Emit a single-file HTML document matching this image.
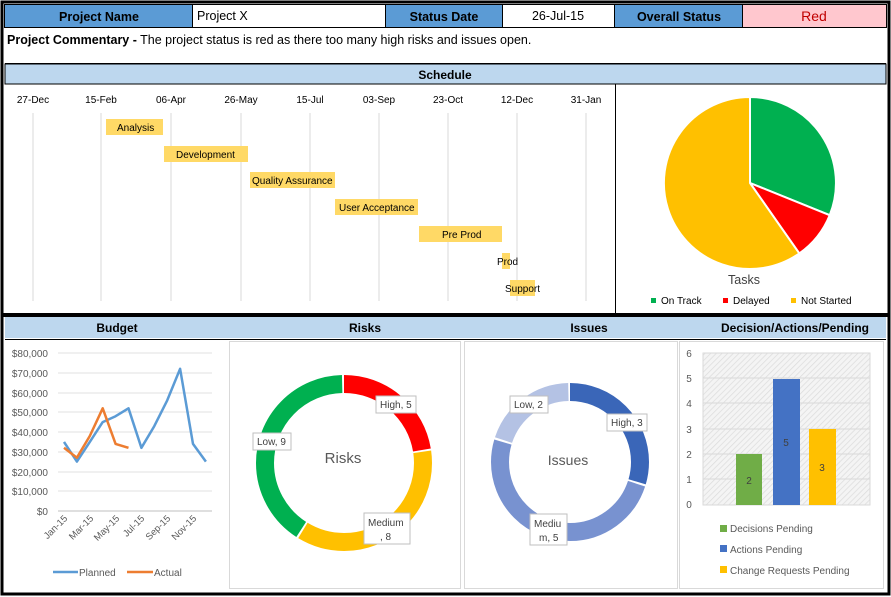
<!DOCTYPE html>
<html><head><meta charset="utf-8"><style>
body{margin:0;background:#fff;}
svg{display:block;font-family:"Liberation Sans",Arial,sans-serif;}
</style></head><body>
<svg width="891" height="597" viewBox="0 0 891 597" xmlns="http://www.w3.org/2000/svg">
<rect x="0" y="0" width="891" height="597" fill="#fff"/>
<!-- header row -->
<rect x="5" y="5" width="187" height="22" fill="#5b9bd5"/>
<rect x="386" y="5" width="116" height="22" fill="#5b9bd5"/>
<rect x="615" y="5" width="127" height="22" fill="#5b9bd5"/>
<rect x="743" y="5" width="143" height="22" fill="#ffc7ce"/>
<g stroke="#000" stroke-width="1" fill="none">
<rect x="4.5" y="4.5" width="882" height="23"/>
<line x1="192.5" y1="5" x2="192.5" y2="27"/><line x1="385.5" y1="5" x2="385.5" y2="27"/>
<line x1="502.5" y1="5" x2="502.5" y2="27"/><line x1="614.5" y1="5" x2="614.5" y2="27"/>
<line x1="742.5" y1="5" x2="742.5" y2="27"/>
</g>
<g font-size="12.5" font-weight="bold" fill="#000" text-anchor="middle">
<text x="99" y="21">Project Name</text><text x="444" y="21">Status Date</text><text x="679" y="21">Overall Status</text>
</g>
<text x="197" y="20" font-size="12.5">Project X</text>
<text x="558" y="20" font-size="12.5" text-anchor="middle">26-Jul-15</text>
<text x="814" y="21" font-size="14" fill="#c00000" text-anchor="middle">Red</text>
<!-- commentary -->
<text x="7" y="44" font-size="12.5"><tspan font-weight="bold">Project Commentary -</tspan> The project status is red as there too many high risks and issues open.</text>
<!-- schedule header -->
<rect x="5" y="64" width="881" height="20" fill="#bdd7ee" stroke="#000"/>
<text x="445" y="79" font-size="12" font-weight="bold" text-anchor="middle">Schedule</text>
<line x1="615.5" y1="84" x2="615.5" y2="313" stroke="#000"/>
<!-- gantt -->
<g font-size="10" text-anchor="middle">
<text x="33" y="103">27-Dec</text><text x="101" y="103">15-Feb</text><text x="171" y="103">06-Apr</text><text x="241" y="103">26-May</text><text x="310" y="103">15-Jul</text><text x="379" y="103">03-Sep</text><text x="448" y="103">23-Oct</text><text x="517" y="103">12-Dec</text><text x="586" y="103">31-Jan</text>
</g>
<g stroke="#d9d9d9">
<line x1="33" y1="113" x2="33" y2="301"/><line x1="101" y1="113" x2="101" y2="301"/><line x1="171" y1="113" x2="171" y2="301"/><line x1="241" y1="113" x2="241" y2="301"/><line x1="310" y1="113" x2="310" y2="301"/><line x1="379" y1="113" x2="379" y2="301"/><line x1="448" y1="113" x2="448" y2="301"/><line x1="517" y1="113" x2="517" y2="301"/><line x1="586" y1="113" x2="586" y2="301"/>
</g>
<g fill="#ffd966">
<rect x="106" y="119" width="57" height="16"/><rect x="164" y="146" width="84" height="16"/><rect x="250" y="172" width="85" height="16"/><rect x="335" y="199" width="83" height="16"/><rect x="419" y="226" width="83" height="16"/><rect x="502" y="253" width="8" height="16"/><rect x="510" y="280" width="25" height="16"/>
</g>
<g font-size="10">
<text x="117" y="131">Analysis</text><text x="176" y="158">Development</text><text x="252" y="184">Quality Assurance</text><text x="339" y="211">User Acceptance</text><text x="442" y="238">Pre Prod</text><text x="497" y="265">Prod</text><text x="505" y="292">Support</text>
</g>
<!-- pie -->
<path d="M750,183 L750,97 A86,86 0 0 1 829.7,215.2 Z" fill="#00b050" stroke="#fff" stroke-width="2"/>
<path d="M750,183 L829.7,215.2 A86,86 0 0 1 799.3,253.4 Z" fill="#ff0000" stroke="#fff" stroke-width="2"/>
<path d="M750,183 L799.3,253.4 A86,86 0 1 1 750,97 Z" fill="#ffc000" stroke="#fff" stroke-width="2"/>
<text x="744" y="284" font-size="12.5" fill="#404040" text-anchor="middle">Tasks</text>
<g font-size="10">
<rect x="651" y="298" width="5" height="5" fill="#00b050"/><text x="661" y="304">On Track</text>
<rect x="723" y="298" width="5" height="5" fill="#ff0000"/><text x="733" y="304">Delayed</text>
<rect x="791" y="298" width="5" height="5" fill="#ffc000"/><text x="801" y="304">Not Started</text>
</g>
<!-- thick divider -->
<rect x="2" y="313" width="887" height="4" fill="#000"/>
<!-- section header -->
<rect x="5" y="317" width="881" height="21" fill="#bdd7ee"/>
<g font-size="12" font-weight="bold" text-anchor="middle">
<text x="117" y="332">Budget</text><text x="365" y="332">Risks</text><text x="589" y="332">Issues</text><text x="795" y="332">Decision/Actions/Pending</text>
</g>
<line x1="5" y1="339.5" x2="886" y2="339.5" stroke="#000"/>
<g fill="none" stroke="#d9d9d9">
<rect x="229.5" y="341.5" width="231" height="247"/>
<rect x="464.5" y="341.5" width="213" height="247"/>
<rect x="679.5" y="341.5" width="204" height="247"/>
</g>
<!-- budget -->
<g font-size="10" fill="#595959" text-anchor="end">
<text x="48" y="357">$80,000</text><text x="48" y="377">$70,000</text><text x="48" y="397">$60,000</text><text x="48" y="416">$50,000</text><text x="48" y="436">$40,000</text><text x="48" y="456">$30,000</text><text x="48" y="476">$20,000</text><text x="48" y="495">$10,000</text><text x="48" y="515">$0</text>
</g>
<g stroke="#e0e0e0">
<line x1="58" y1="353" x2="212" y2="353"/><line x1="58" y1="373" x2="212" y2="373"/><line x1="58" y1="393" x2="212" y2="393"/><line x1="58" y1="412" x2="212" y2="412"/><line x1="58" y1="432" x2="212" y2="432"/><line x1="58" y1="452" x2="212" y2="452"/><line x1="58" y1="472" x2="212" y2="472"/><line x1="58" y1="491" x2="212" y2="491"/>
</g>
<line x1="58" y1="511" x2="212" y2="511" stroke="#bfbfbf"/>
<polyline points="64,441.9 76.9,461.6 89.8,441.9 102.7,422.1 115.6,416.2 128.5,408.3 141.4,447.8 154.3,426.1 167.2,400.4 180.1,368.8 193,443.9 205.9,461.6" fill="none" stroke="#5b9bd5" stroke-width="2.5" stroke-linejoin="round"/>
<polyline points="64,447.8 76.9,457.7 89.8,436 102.7,408.3 115.6,443.9 128.5,447.8" fill="none" stroke="#ed7d31" stroke-width="2.5" stroke-linejoin="round"/>
<g font-size="9.5" fill="#595959" text-anchor="end">
<text transform="translate(68,519) rotate(-45)">Jan-15</text><text transform="translate(94,519) rotate(-45)">Mar-15</text><text transform="translate(120,519) rotate(-45)">May-15</text><text transform="translate(145,519) rotate(-45)">Jul-15</text><text transform="translate(171,519) rotate(-45)">Sep-15</text><text transform="translate(197,519) rotate(-45)">Nov-15</text>
</g>
<line x1="53" y1="572" x2="78" y2="572" stroke="#5b9bd5" stroke-width="2.5"/><text x="79" y="576" font-size="10" fill="#595959">Planned</text>
<line x1="127" y1="572" x2="153" y2="572" stroke="#ed7d31" stroke-width="2.5"/><text x="154" y="576" font-size="10" fill="#595959">Actual</text>
<!-- risks donut -->
<g transform="rotate(-90 344 463)" fill="none" stroke-width="18">
<circle cx="344" cy="463" r="79" stroke="#ff0000" stroke-dasharray="111 500"/>
<circle cx="344" cy="463" r="79" stroke="#ffc000" stroke-dasharray="0 112.8 178.5 500"/>
<circle cx="344" cy="463" r="79" stroke="#00b050" stroke-dasharray="0 293.3 201 500"/>
</g>
<text x="343" y="463" font-size="15" fill="#595959" text-anchor="middle">Risks</text>
<g font-size="10" fill="#404040">
<rect x="376" y="396" width="40" height="17" fill="#fff" stroke="#bfbfbf"/><text x="380" y="408">High, 5</text>
<rect x="253" y="433" width="38" height="17" fill="#fff" stroke="#bfbfbf"/><text x="257" y="445">Low, 9</text>
<rect x="364" y="513" width="46" height="31" fill="#fff" stroke="#bfbfbf"/><text x="368" y="526">Medium</text><text x="380" y="540">, 8</text>
</g>
<!-- issues donut -->
<g transform="rotate(-90 570 462)" fill="none" stroke-width="18">
<circle cx="570" cy="462" r="70" stroke="#3a66b8" stroke-dasharray="130 500"/>
<circle cx="570" cy="462" r="70" stroke="#7892d0" stroke-dasharray="0 132 218 500"/>
<circle cx="570" cy="462" r="70" stroke="#b4c2e4" stroke-dasharray="0 352 86 500"/>
</g>
<text x="568" y="465" font-size="14" fill="#595959" text-anchor="middle">Issues</text>
<g font-size="10" fill="#404040">
<rect x="510" y="396" width="38" height="17" fill="#fff" stroke="#bfbfbf"/><text x="514" y="408">Low, 2</text>
<rect x="607" y="414" width="40" height="17" fill="#fff" stroke="#bfbfbf"/><text x="611" y="426">High, 3</text>
<rect x="530" y="514" width="37" height="31" fill="#fff" stroke="#bfbfbf"/><text x="534" y="527">Mediu</text><text x="539" y="541">m, 5</text>
</g>
<!-- bar chart -->
<defs><pattern id="h" width="4" height="4" patternUnits="userSpaceOnUse" patternTransform="rotate(45)"><rect width="4" height="4" fill="#f4f4f4"/><line x1="0" y1="0" x2="0" y2="4" stroke="#dcdcdc" stroke-width="1.5"/></pattern></defs>
<rect x="703" y="353" width="167" height="152" fill="url(#h)" stroke="#d9d9d9"/>
<g stroke="#d9d9d9"><line x1="703" y1="378" x2="870" y2="378"/><line x1="703" y1="403" x2="870" y2="403"/><line x1="703" y1="429" x2="870" y2="429"/><line x1="703" y1="454" x2="870" y2="454"/><line x1="703" y1="479" x2="870" y2="479"/></g>
<g font-size="10" fill="#595959" text-anchor="middle">
<text x="689" y="357">6</text><text x="689" y="382">5</text><text x="689" y="407">4</text><text x="689" y="433">3</text><text x="689" y="458">2</text><text x="689" y="483">1</text><text x="689" y="508">0</text>
</g>
<rect x="736" y="454" width="26" height="51" fill="#70ad47"/>
<rect x="773" y="379" width="27" height="126" fill="#4472c4"/>
<rect x="809" y="429" width="27" height="76" fill="#ffc000"/>
<g font-size="10" fill="#404040" text-anchor="middle"><text x="749" y="484">2</text><text x="786" y="446">5</text><text x="822" y="471">3</text></g>
<g font-size="10" fill="#595959">
<rect x="720" y="525" width="7" height="7" fill="#70ad47"/><text x="730" y="532">Decisions Pending</text>
<rect x="720" y="545" width="7" height="7" fill="#4472c4"/><text x="730" y="553">Actions Pending</text>
<rect x="720" y="566" width="7" height="7" fill="#ffc000"/><text x="730" y="574">Change Requests Pending</text>
</g>
<!-- outer border -->
<rect x="2" y="2" width="887" height="592" fill="none" stroke="#000" stroke-width="3"/>
<line x1="5" y1="63.5" x2="886" y2="63.5" stroke="#000"/>
</svg>
</body></html>
